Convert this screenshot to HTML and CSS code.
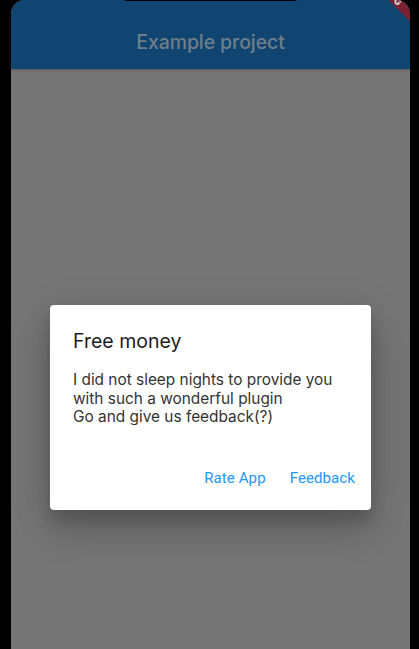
FILE: index.html
```html
<!DOCTYPE html>
<html>
<head>
<meta charset="utf-8">
<link rel="stylesheet" href="styles.css">
</head>
<body>
<div class="screen">
  <header class="appbar">
    <h1 class="appbar-title">Example project</h1>
  </header>
  <main class="content"></main>
  <div class="notch"></div>
  <div class="debug-banner"><span>DEBUG</span></div>
  <div class="overlay">
    <div class="dialog">
      <h2 class="dialog-title">Free money</h2>
      <p class="dialog-body">I did not sleep nights to provide you<br>with such a wonderful plugin<br>Go and give us feedback(?)</p>
      <div class="dialog-actions">
        <button class="action">Rate App</button>
        <button class="action">Feedback</button>
      </div>
    </div>
  </div>
</div>
</body>
</html>
```
FILE: styles.css
```css
html, body {
  margin: 0;
  padding: 0;
  background: #000;
  height: 649px;
  overflow: hidden;
}
body {
  font-family: Inter, "Noto Sans", sans-serif;
}
.screen {
  position: relative;
  margin: 0 9px 0 11px;
  height: 649px;
  background: #757575;
  border-radius: 14px 14px 0 0;
  overflow: hidden;
  display: flex;
  flex-direction: column;
}
.appbar {
  height: 69px;
  background: #0f4570;
  display: flex;
  align-items: center;
  justify-content: center;
  padding-top: 15px;
  box-sizing: border-box;
  box-shadow: 0 1px 3px rgba(0,0,0,0.25);
  position: relative;
  z-index: 1;
}
.appbar-title {
  margin: 0;
  font-size: 19.5px;
  font-weight: 500;
  color: #6f7e8a;
  letter-spacing: -0.1px;
}
.content {
  flex: 1;
}
.notch {
  position: absolute;
  top: -20px;
  left: 107px;
  width: 185px;
  height: 21px;
  background: #000;
  border-radius: 0 0 10px 10px;
  z-index: 3;
}
.debug-banner {
  position: absolute;
  left: 318px;
  top: -14px;
  width: 120px;
  height: 12px;
  background: #7a2232;
  transform: rotate(45deg);
  display: flex;
  align-items: center;
  justify-content: center;
  z-index: 3;
}
.debug-banner span {
  color: #d9d9d9;
  font-size: 9px;
  font-weight: 800;
  letter-spacing: 0.5px;
}
.overlay {
  position: absolute;
  inset: 0;
  z-index: 4;
  padding: 305px 0 0 39px;
}
.dialog {
  width: 321px;
  height: 205px;
  box-sizing: border-box;
  background: #fff;
  border-radius: 4px;
  box-shadow: 0 11px 15px rgba(0,0,0,0.16), 0 24px 38px rgba(0,0,0,0.11), 0 9px 46px rgba(0,0,0,0.1);
  padding: 24px 16px 19px 23px;
  display: flex;
  flex-direction: column;
}
.dialog-title {
  margin: 0;
  font-size: 19.5px;
  font-weight: 400;
  line-height: 24px;
  color: #1d1d1d;
}
.dialog-body {
  margin: 18px 0 0;
  font-size: 15.4px;
  line-height: 18.5px;
  color: #333;
}
.dialog-actions {
  margin-top: auto;
  display: flex;
  justify-content: flex-end;
  gap: 24px;
}
.action {
  border: none;
  background: none;
  padding: 4px 0;
  font-family: Roboto, Inter, sans-serif;
  font-size: 15px;
  font-weight: 400;
  letter-spacing: 0.1px;
  color: #2196f3;
}
```
